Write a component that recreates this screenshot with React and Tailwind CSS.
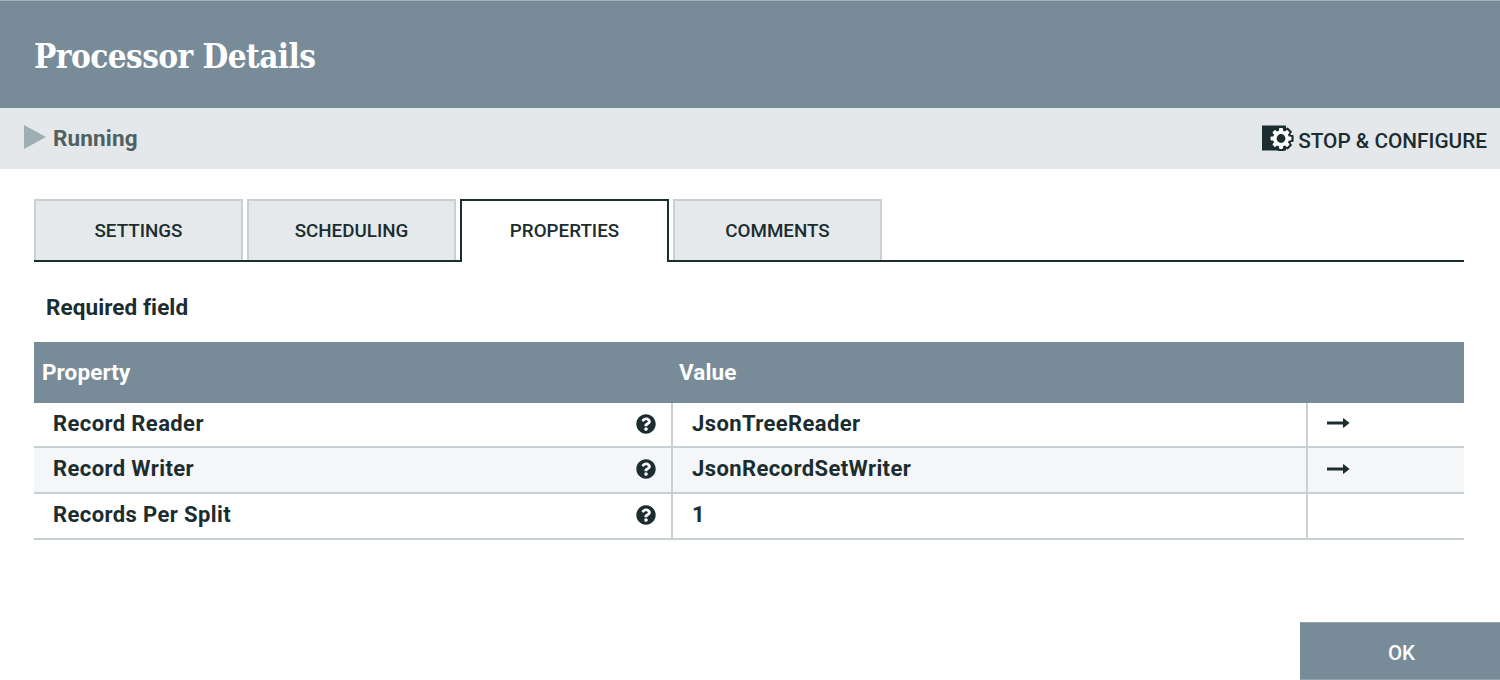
import React from "react";
import { FaQuestionCircle } from "react-icons/fa";

const tabs = ["SETTINGS", "SCHEDULING", "PROPERTIES", "COMMENTS"];

const rows = [
  { name: "Record Reader", value: "JsonTreeReader", link: true, height: "h-[45px]", bg: "bg-white", pad: "pb-[2px]" },
  { name: "Record Writer", value: "JsonRecordSetWriter", link: true, height: "h-[46px]", bg: "bg-[#f4f6f8]", pad: "pb-[3px]" },
  { name: "Records Per Split", value: "1", link: false, height: "h-[46px]", bg: "bg-white", pad: "pb-[3px]" },
];

function StopConfigureIcon() {
  const teeth = [0, 45, 90, 135, 180, 225, 270, 315];
  const shape = (r, w, len) => (
    <>
      <circle cx="19" cy="13.5" r={r} />
      {teeth.map((a) => (
        <rect key={a} x={19 - w / 2} y={13.5 - len} width={w} height={len} rx="0.8" transform={`rotate(${a} 19 13.5)`} />
      ))}
    </>
  );
  return (
    <svg width="32" height="27" viewBox="0 0 32 27" className="shrink-0">
      <rect x="0" y="0.5" width="24" height="25" fill="#1b2d2f" />
      <g fill="#1b2d2f">{shape(10.6, 6.8, 12.6)}</g>
      <g fill="#ffffff">{shape(8, 4, 10.4)}</g>
      <circle cx="19" cy="13.5" r="4.4" fill="#1b2d2f" />
    </svg>
  );
}

function Arrow() {
  return (
    <svg width="23" height="10" viewBox="0 0 23 10" fill="#1b2d2f">
      <path d="M0 3.5H16V0.6Q16 0 16.6 0.2L22 4.5Q22.5 5 22 5.5L16.6 9.8Q16 10 16 9.4V6.5H0Z" />
    </svg>
  );
}

export default function App() {
  return (
    <div className="flex h-[680px] w-[1500px] flex-col overflow-hidden bg-white font-['Roboto',sans-serif] text-[#1b2d2f]">
      <header className="flex h-[108px] shrink-0 items-center border-t border-[#a4b5b9] bg-[#788b98] pl-[34px] pt-[3px]">
        <h1 className="whitespace-nowrap font-['Roboto_Slab','DejaVu_Serif_Condensed','DejaVu_Serif',serif] text-[33px] font-bold leading-none tracking-[-0.55px] text-white">
          Processor Details
        </h1>
      </header>

      <div className="flex h-[61px] shrink-0 items-center justify-between bg-[#e4e8eb] pl-6 pr-[13px]">
        <div className="flex items-center gap-[7px]">
          <svg width="22" height="24" viewBox="0 0 22 24" className="mb-[3px]">
            <path d="M0 0L22 12L0 24Z" fill="#9eafb3" />
          </svg>
          <span className="text-[22.5px] font-bold leading-none tracking-[0.15px] text-[#50605f]">Running</span>
        </div>
        <div className="flex items-center gap-1">
          <StopConfigureIcon />
          <span className="whitespace-nowrap pt-[5px] text-[20.8px] font-medium leading-none">STOP &amp; CONFIGURE</span>
        </div>
      </div>

      <div className="mx-[34px] mt-[30px] w-[1430px] shrink-0">
        <nav className="flex h-[63px]">
          {tabs.map((tab) => {
            const active = tab === "PROPERTIES";
            return (
              <div key={tab} className="flex">
                <div
                  className={
                    active
                      ? "flex w-[209px] items-center justify-center border-x-2 border-t-2 border-[#1b2d2f] bg-white text-[18.8px] font-medium"
                      : "flex w-[209px] flex-col border-b-2 border-[#1b2d2f] text-[18.8px] font-medium"
                  }
                >
                  {active ? (
                    <span className="pb-px leading-none">{tab}</span>
                  ) : (
                    <div className="flex flex-1 items-center justify-center border-x-2 border-t-2 border-[#c7d0d3] bg-[#e6e9ec] pt-px leading-none">
                      {tab}
                    </div>
                  )}
                </div>
                {tab !== "COMMENTS" && <div className="w-1 border-b-2 border-[#1b2d2f]" />}
              </div>
            );
          })}
          <div className="flex-1 border-b-2 border-[#1b2d2f]" />
        </nav>

        <div className="flex h-[80px] items-center pl-3 pt-[11px] text-[22.5px] font-bold leading-none tracking-[0.08px]">Required field</div>

        <section>
          <div className="flex h-[61px] items-center bg-[#788b98] text-[22.5px] font-bold leading-none tracking-[0.1px] text-white">
            <div className="w-[637px] pl-2">Property</div>
            <div className="pl-2">Value</div>
          </div>
          {rows.map((row) => (
            <div key={row.name} className={`flex border-b-2 border-[#c7d0d3] text-[22px] font-bold leading-none tracking-[0.4px] ${row.height} ${row.bg}`}>
              <div className={`flex w-[639px] items-center justify-between border-r-2 border-[#c7d0d3] pl-[19px] pr-[15px] ${row.pad}`}>
                <span>{row.name}</span>
                <FaQuestionCircle size={20} />
              </div>
              <div className={`flex w-[635px] items-center border-r-2 border-[#c7d0d3] pl-[19px] ${row.pad}`}>{row.value}</div>
              <div className="flex items-center pb-[3px] pl-[19px]">{row.link && <Arrow />}</div>
            </div>
          ))}
        </section>
      </div>

      <footer className="mt-auto flex shrink-0 justify-end">
        <button className="h-[58px] w-[200px] border-y border-[#93a4ab] bg-[#788b98] pl-[3px] pt-1 text-[20.5px] font-medium leading-none text-white">OK</button>
      </footer>
    </div>
  );
}
